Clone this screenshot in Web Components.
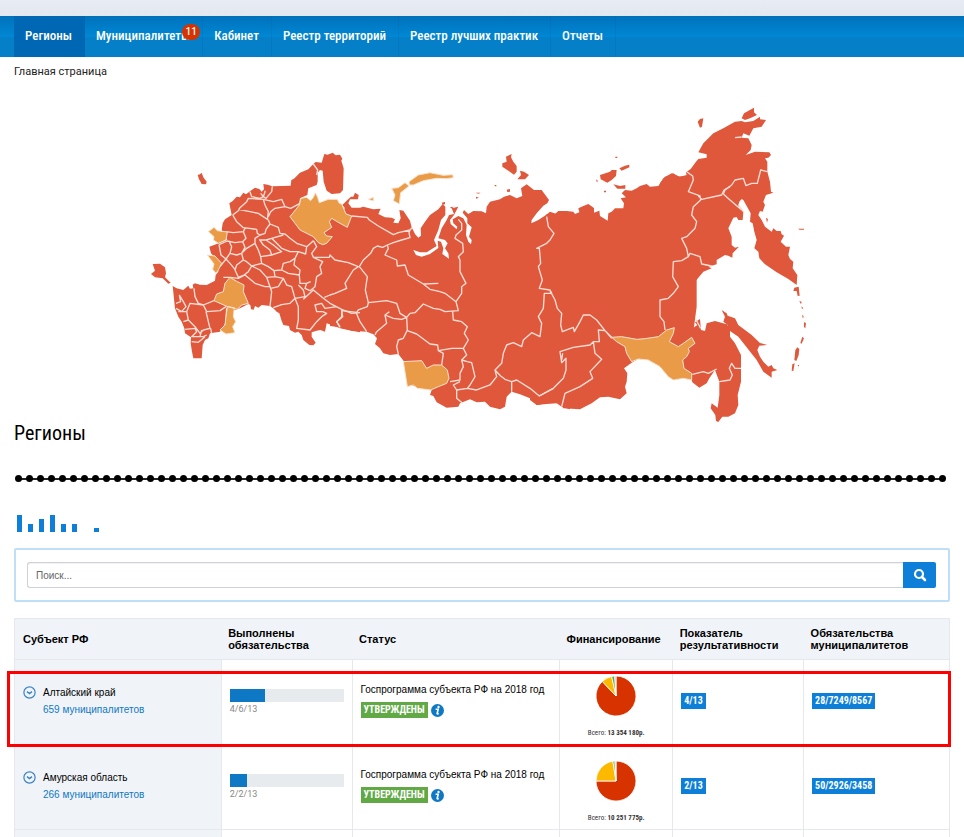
<!DOCTYPE html>
<html lang="ru">
<head>
<meta charset="utf-8">
<title>Регионы</title>
<style>
html, body { margin: 0; }
body { background: #fff; color: #000; font: 10px/12px "Roboto", "Liberation Sans", sans-serif; }
</style>
</head>
<body>
<regions-page></regions-page>

<template id="page-tpl">
<style>
:host { display: block; }
.strip { height: 16px; background: linear-gradient(#e7ecf5, #e3e7ef); }
main { padding: 0 14px; }
.crumbs { font-size: 11px; line-height: 14px; padding: 8px 0 16px; }
.crumbs a { color: #222; text-decoration: none; }
h1 { margin: 0; font: 400 20px/24px "Roboto Condensed", "Liberation Sans Narrow", "Roboto", sans-serif; }
range-dots { margin-top: 30px; }
mini-bars { margin: 33px 0 16px 3px; }
search-panel { margin-bottom: 16px; }
</style>
<div class="strip"></div>
<nav-bar>
  <nav-item current>Регионы</nav-item>
  <nav-item badge="11">Муниципалитеты</nav-item>
  <nav-item>Кабинет</nav-item>
  <nav-item>Реестр территорий</nav-item>
  <nav-item>Реестр лучших практик</nav-item>
  <nav-item>Отчеты</nav-item>
</nav-bar>
<main>
  <div class="crumbs"><a href="#">Главная страница</a></div>
  <russia-map></russia-map>
  <h1>Регионы</h1>
  <range-dots></range-dots>
  <mini-bars values="17 8 13 17 8 8 0 4"></mini-bars>
  <search-panel></search-panel>
  <region-table></region-table>
</main>
</template>

<template id="nav-bar-tpl">
<style>
:host { display: block; padding: 0 14px; background: linear-gradient(#0071bb 0, #0085d1 45%, #0088d4 50%, #047fc8 51%, #047fc8 100%); }
nav { display: flex; height: 41px; }
</style>
<nav><slot></slot></nav>
</template>

<template id="nav-item-tpl">
<style>
:host { display: flex; border-right: 1px solid rgba(0, 90, 160, .2); }
:host([current]) { background: #0067b5; }
a { position: relative; padding: 0 12px 0 11px; color: #fff; text-decoration: none; white-space: nowrap; font: 500 13px/40px "Roboto Condensed", "Liberation Sans Narrow", "Roboto", sans-serif; }
b { position: absolute; top: 8px; right: 2px; min-width: 18px; box-sizing: border-box; padding: 0 3px; border-radius: 8px; background: #d63301; text-align: center; font: 500 10px/16px "Roboto", sans-serif; }
b:empty { display: none; }
</style>
<a href="#"><slot></slot><b></b></a>
</template>

<template id="map-tpl">
<style>
:host { display: block; }
svg { display: block; width: 100%; max-width: 680px; margin: 0 auto; overflow: visible; }
.land { fill: #e0583c; }
.gold { fill: #e99b48; stroke: #fae3cf; stroke-width: 3; stroke-linejoin: round; }
.line { fill: none; stroke: #fbded6; stroke-width: 4; stroke-linejoin: round; }
.west { transform: translate(140px, 140px) scale(.33333); }
.ural { transform: translate(330px, 140px) scale(.33333); }
.lena { transform: translate(530px, 140px) scale(.33333); }
.east { transform: translate(660px, 95px) scale(.33333); }
</style>
<svg viewBox="142 95 680 326" role="img" aria-label="Карта регионов">
<path class="land west" d="M370 132L383 134 397 139 452 137 454 120 462 116 480 98 505 88 520 72 527 66 545 68 553 42 563 44 578 38 587 46 600 44 607 56 604 62 611 85 609 150 600 160 575 162 560 152 551 125 548 92 540 90 533 98 533 125 530 135 505 145 502 165 480 175 478 190 500 200 592 200 660 240V577L635 572 600 565 583 558 560 550 555 575 541 570 530 572 515 577 515 590 527 608 520 616 508 615 490 600 485 585 475 575 465 578 450 570 447 558 430 555 424 540 418 520 410 515 400 505 390 498 365 495 355 503 345 498 341 509 333 508 331 495 325 492 300 505 285 510 258 505 256 550 240 575 210 580 205 595 195 600 188 615 185 655 160 655 156 635 152 610 153 592 135 580 133 565 125 545 115 530 105 505 98 438 110 445 130 450 145 437 150 446 160 445 158 434 165 430 180 434 200 435 225 422 227 405 235 395 232 370 218 345 213 340 208 320 230 312 262 300 245 270 248 250 255 238 275 225 268 190 278 183 290 170 300 172 310 158 318 163 335 150 345 143 358 147 365 155 372 148Z M173 105L180 103 185 98 190 112 200 125 198 133 185 132 177 118Z M38 372L60 371 75 382 78 400 75 412 92 428 85 431 68 415 45 412 33 402 45 392Z"/>
<path class="land ural" d="M20 220L45 205 37 195 52 180 63 170 70 170 75 158 86 165 84 178 60 178 55 190 65 203 90 203 100 200 130 208 152 206 145 222 165 232 185 233 195 238 190 248 205 250 212 235 208 210 220 212 240 242 245 262 255 282 265 293 273 287 272 265 285 245 300 225 325 208 338 192 346 200 346 225 333 240 325 270 312 300 320 318 290 337 270 337 250 330 258 345 275 350 300 342 325 324 323 302 333 305 340 325 337 342 357 356 355 340 345 325 353 310 345 300 325 295 335 265 350 240 357 225 372 222 365 205 385 200 372 225 360 240 362 252 380 268 382 260 370 250 368 238 385 228 400 235 410 255 408 285 415 305 423 313 425 300 417 290 425 262 412 250 412 235 398 218 402 210 415 222 430 213 455 214 468 220 470 200 480 185 510 178 522 170 540 165 560 175 577 168 573 145 590 133 612 150 635 150 657 180 652 190 640 197 620 220 605 240 604 250 625 240 640 230 648 225 660 215 680 222 690 215 720 216V808L695 800 680 790 650 792 620 795 600 775 570 763 545 755 530 770 525 800 510 808 480 800 465 785 440 787 420 778 390 790 385 800 350 803 320 787 310 768 300 765 305 750 262 740 240 735 225 668 205 642 180 645 160 640 150 625 135 612 141 595 130 583 110 575 65 572 30 562 0 558Z M517 70L530 65 528 50 545 42 543 52 550 65 560 78 560 95 552 104 535 92 517 80ZM562 118L573 105 570 92 582 95 597 105 585 118ZM335 188L345 186 345 193 338 194ZM437 158H452L445 161ZM494 135H499V139H494ZM438 170L447 173 438 176ZM530 149L540 147 540 155 532 156ZM360 202L370 200 366 206Z"/>
<path class="land lena" d="M0 780L20 300 50 222 75 222 85 213 110 213 130 215 135 222 148 217 145 205 160 198 175 192 192 204 192 218 208 212 210 228 233 242 235 220 245 215 255 205 280 205 282 190 272 175 288 172 275 160 285 150 305 152 320 145 330 138 350 132 360 140 385 138 400 115 425 100 450 110 470 105 500 200V500L480 650 485 720 460 715 430 720 415 710 390 680 355 660 325 657 305 668 282 685 292 700 290 725 285 740 290 760 270 778 235 770 210 772 185 790 150 808 100 805 90 790 60 788 20 795Z M210 105L240 95 245 90 260 90 258 108 245 120 232 128 212 118ZM268 85L285 77 298 74 298 82 275 92ZM250 133L270 138 286 135 286 146 262 146ZM198 118L205 124 200 125ZM222 152H228V157H222ZM256 50H262V54H256Z"/>
<path class="land east" d="M0 265L15 245 40 235 55 245 80 242 78 232 92 222 108 200 115 192 140 188 140 178 115 172 130 145 160 115 190 100 225 80 245 78 255 82 280 78 300 65 300 73 318 75 305 95 280 100 268 122 250 115 245 128 265 130 275 150 272 165 257 180 285 170 328 172 333 180 325 188 315 190 322 200 322 230 330 260 333 290 340 293 318 300 310 320 315 330 308 350 300 348 295 360 305 375 315 395 335 410 340 400 350 408 362 408 365 418 372 422 362 440 378 455 390 455 385 480 390 492 400 500 398 520 412 540 410 570 385 552 350 532 315 508 298 490 295 470 283 460 290 435 283 410 278 385 270 380 272 355 250 315 245 312 238 320 235 330 250 350 248 375 235 375 230 366 220 368 205 400 215 425 215 450 225 458 237 455 218 475 217 488 205 482 195 480 170 495 170 508 145 515 155 520 130 530 115 548 105 560 105 600 98 655 85 690 100 698 112 690 105 682 120 672 123 705 135 708 140 685 165 678 200 688 210 705 210 725 225 745 243 780 243 860 233 900 235 930 225 955 205 965 187 965 175 981 168 978 166 960 152 940 155 925 173 938 178 900 178 860 165 825 148 850 140 865 118 878 97 862 95 855 70 850 40 855 0 815Z M113 80L120 72 130 70 126 95 120 98ZM245 70L252 55 282 38 282 52 291 60 270 70 255 75ZM185 645L200 655 203 662 225 670 235 690 275 720 300 744 322 750 298 752 292 765 300 785 310 800 325 815 335 810 340 820 352 825 335 830 335 848 310 830 290 795 235 725 210 708 200 700 203 690 190 680 195 665ZM403 578L416 575 419 602 413 603 410 588 400 588ZM418 618L425 620 423 628ZM424 634L430 640 426 642ZM426 660L431 663 429 671ZM432 682L438 684 436 700 432 696ZM427 725L432 730 425 746 421 744ZM406 765L412 757 418 762 416 780 409 798 403 795ZM397 808L404 805 400 828 395 827ZM318 368L324 372 321 383ZM413 811L418 809 415 815ZM415 401L432 401 432 404 418 404Z"/>
<path class="line west" d="M520 72L533 90 530 105M376 152L370 170 378 175 395 155 397 139M330 155L335 170 360 175 370 170 362 160M278 225L295 212 300 203 320 185 325 175 370 178 375 195 385 215 382 240M370 178L400 185 425 178 435 200 405 205 392 215 385 230M435 200L452 205 480 190M295 208L330 215 355 220 385 240 390 252 415 262 420 280 435 282 450 295 470 310 500 320 512 310 520 302M278 225L290 245 310 263 350 268 352 280 360 285 375 280 378 268 390 252M258 275L280 278 310 275 316 263M237 314L262 303 285 308 308 305 318 295 310 275M360 285L345 295 345 310M358 300L378 300 395 295 430 285M237 314L243 345 258 357 270 340 275 320 268 305M270 340L290 345 305 340 315 322 308 305M305 340L320 325 345 310 355 330 362 350 395 345 390 330 370 315 358 298M378 300L400 315 425 335 395 345M395 295L425 325 450 335 475 335 497 342 500 320M362 350L365 370 335 378 320 365 310 360 290 375 285 390 295 412 312 405 325 395 335 378M305 340L310 360M258 357L270 370 285 388M240 380L258 357M365 370L385 380 402 392 425 390 430 370 450 365 465 355 475 335M335 378L360 390 380 412 405 410 402 392M250 412L270 412 295 415 315 405 345 430 375 440 390 440 380 412M405 410L430 415 440 435 455 440 465 475 450 490 425 494 400 503M390 440L395 455 390 500M392 445L415 440 430 415M425 390L445 400 478 405 480 390 462 375 465 355M478 405L480 430 500 430 512 425M500 430L495 445 510 452 525 440 530 410 545 400 540 380 548 365 520 352M475 435L490 450 495 470 465 475M520 302L530 320 515 340 520 352 568 352 570 345 585 360 625 368 655 380 640 390 615 430 620 445 585 460 570 465 553 472M490 478L520 450 550 475 570 490 605 508 635 520 660 518M465 475L475 500 475 540 470 565 510 570 530 545 545 530 560 520 548 515 530 515 525 495 545 490 555 505 590 500M605 508L605 530 590 545 600 560M162 445L165 470 175 490 190 495 200 515 240 512 258 500M118 465L130 485 138 500 125 515 108 505M118 465L122 485 108 490M190 495L150 490 140 515 145 540 165 560 180 580 190 570 210 565 205 545 198 515M115 515L140 515M130 545L145 540M135 568L165 565 170 575 155 590 190 590 200 585M155 605L175 607 195 590M185 570L180 590M212 565L215 580M222 482L190 495"/>
<path class="line ural" d="M65 228L112 232 118 240 145 258 190 284 205 278 240 270 237 278 240 293 215 300 190 308 172 315 158 322 142 318 130 325 122 340 100 360 88 380M88 380L112 410 106 450 115 488 112 500 85 510 80 517 35 512M35 512L38 530 20 545 30 562M78 517L90 545 110 575M240 270L247 262M172 315L175 325 165 345 200 360 202 378 225 375 235 405 280 432 325 430M280 432L300 448 330 455 345 460 378 485M115 488L170 482 200 490 210 520 230 532 240 520 255 518 280 492 310 505 330 508 345 515 385 512 378 485 395 460 395 440 408 430 390 395 390 360 385 350 400 335 398 310 375 295 378 285 395 270 395 250 385 238M230 532L215 538 190 535 165 525 178 515M165 525L170 550 140 575 135 585M230 532L232 570 220 595 205 600 200 620 205 642M232 572L260 582 300 612 323 615 325 632 365 625 400 625 415 600 403 580 412 560 395 545 370 540 368 515M325 632L340 640 335 675M400 625L410 645 395 660 400 680 390 700 390 720 360 725M395 660L412 665 425 668 435 710 420 735 412 745 380 750 370 735 390 725M380 750L380 775 398 790M412 745L440 750 480 735 500 710 495 690 515 670 520 640 530 615 550 608 575 620 580 600 605 578 630 590 635 550 625 530 640 505 643 460 665 460 660 450 628 445 637 420 625 380 632 370 628 325 620 325 650 310 660 300 672 280 655 260 650 230M495 690L512 708 525 718 545 725 545 755M545 725L560 720 600 745 628 768 670 745"/>
<path class="line lena" d="M60 452L75 480 82 505 95 520 92 555 97 575 130 562 133 575 150 545 160 525 180 525 200 540 225 572 245 595M245 592L225 572 205 570 208 605 190 605 180 615 130 622 90 635 95 668 108 655 108 690 100 715 70 745 27 768M98 640L95 660M190 605L195 640 215 658 180 695 188 715 150 740 105 760 100 780 95 800M405 570L402 545 390 530 390 480 415 475 430 460 445 440 428 410 430 365 455 362 475 350 480 340 510 350 515 372 545 378M475 350L470 325 455 295 470 290 495 265 500 245 485 225 490 200 512 180 510 168 475 155 490 120 488 108 470 95M505 168L515 178 575 165 582 150 600 140"/>
<path class="line east" d="M190 297L195 285 215 270 225 255 250 250 258 272 275 265 292 265 302 225 322 230M190 297L210 315 245 345M236 330L250 350M225 128L245 126M97 838L130 830 145 835 170 822M178 860L210 855 217 840 208 820 215 805 225 820 243 820M107 672L122 700"/>
<path class="gold west" d="M450 230L478 195 483 175 500 172 512 182 520 172 526 158 533 172 538 188 565 178 592 178 598 190 605 192 618 222 635 228 622 262 600 250 575 235 568 245 575 262 552 278 560 288 577 290 560 310 548 314 535 308 520 290 480 270 465 250ZM205 275L222 262 232 272 262 276 258 300 235 310 220 300 222 290ZM202 345L225 348 245 370 235 390 228 400 218 388 222 372ZM270 412L290 424 312 435 310 455 325 490 305 495 292 508 258 498 222 482 230 462 250 455 255 430ZM262 500L283 503 280 530 287 545 278 560 285 578 258 582 240 570 255 555 258 530Z"/>
<path class="gold ural" d="M185 145L205 143 225 128 237 138 225 148 212 158 208 192 190 182 195 165ZM237 125L265 105 300 98 340 106 368 104 370 113 350 116 320 115 280 122 250 135 238 135ZM115 178L130 172 130 183ZM220 665L275 662 290 685 310 675 335 675 352 690 357 715 350 730 325 740 302 750 262 745 250 735 232 740Z"/>
<path class="gold lena" d="M245 592L275 590 320 598 345 596 385 590 410 570 433 563 430 580 418 605 445 620 460 610 485 592 495 610 475 625 478 635 470 650 458 660 462 685 485 700 485 720 460 715 430 720 415 710 390 680 355 660 325 657 305 665 290 640 285 620 260 605Z"/>
</svg>
</template>

<template id="dots-tpl">
<style>
:host { display: block; padding: 0 3px 0 1px; }
div { display: flex; justify-content: space-between; align-items: center; background: linear-gradient(#222, #222) center / calc(100% - 6px) 2px no-repeat; }
i { width: 7px; height: 7px; border-radius: 50%; background: #000; }
</style>
<div></div>
</template>

<template id="bars-tpl">
<style>
:host { display: flex; align-items: flex-end; gap: 6px; height: 17px; }
i { width: 5px; background: #0d7fd8; }
</style>
</template>

<template id="search-tpl">
<style>
:host { display: block; border: 2px solid #bfdff7; border-radius: 2px; padding: 12px 12px 12px 11px; }
form { display: flex; height: 26px; }
input { flex: 1; min-width: 0; box-sizing: border-box; border: 1px solid #cdd1d8; border-right: 0; border-radius: 3px 0 0 3px; padding: 2px 8px 0; font: 10px/12px "Liberation Sans", sans-serif; color: #333; box-shadow: inset 0 1px 1px rgba(0, 0, 0, .06); outline: 0; }
input::placeholder { color: #666; opacity: 1; }
button { width: 33px; border: 0; padding: 0; border-radius: 0 2px 2px 0; background: #0d7fd8; display: grid; place-items: center; }
</style>
<form onsubmit="return false">
  <input type="text" placeholder="Поиск..." aria-label="Поиск">
  <button type="submit" aria-label="Найти"><svg width="14" height="14" viewBox="0 0 14 14" fill="none" stroke="#fff"><circle cx="6" cy="6" r="4" stroke-width="2.2"/><path d="M9 9l3 3" stroke-width="2.6" stroke-linecap="round"/></svg></button>
</form>
</template>

<template id="progress-tpl">
<style>
:host { display: block; color: #888; font: 9px/14px "Roboto", sans-serif; }
.track { height: 13px; background: #e7ebee; }
.fill { height: 100%; background: #0f78c4; }
</style>
<div class="track"><div class="fill"></div></div>
<slot></slot>
</template>

<template id="tag-tpl">
<style>
:host { display: inline-block; padding: 0 3px; background: #0d7fd8; color: #fff; font: 700 10px/16px "Roboto Condensed", "Liberation Sans Narrow", sans-serif; white-space: nowrap; }
:host([tone="green"]) { background: #60a945; }
</style>
<slot></slot>
</template>

<template id="pie-tpl">
<style>
:host { display: block; text-align: center; color: #333; font: 7px/10px "Roboto Condensed", "Liberation Sans Narrow", sans-serif; }
svg { display: block; margin: 0 auto 12px; }
</style>
<svg width="40" height="40" viewBox="-20 -20 40 40" stroke="#fff" stroke-width=".8"></svg>
<slot></slot>
</template>

<template id="table-tpl">
<style>
:host { display: block; position: relative; }
table { width: 100%; border-collapse: collapse; table-layout: fixed; }
th, td { border: 1px solid #e5e9ed; text-align: left; vertical-align: top; }
th { height: 40px; padding: 0 7px; background: #f0f4f8; border-left: 0; border-right: 0; vertical-align: middle; white-space: nowrap; font: 700 11px/12px "Liberation Sans", sans-serif; }
tr > :first-child { background: #f0f4f8; border-left: 1px solid #e5e9ed; padding-left: 8px; }
th:last-child { border-right: 1px solid #e5e9ed; }
td { height: 85px; box-sizing: border-box; padding: 24px 8px 0; }
tr.tail td { height: 8px; padding: 0; border-bottom: 0; }
.name { display: flex; gap: 7px; line-height: 17px; }
.name, .status { font-family: "Liberation Sans", sans-serif; }
.name button { border: 0; padding: 2px 0 0; background: none; height: 15px; }
.name svg, .info svg { display: block; }
.name a { color: #0f78c4; text-decoration: none; }
.info { display: flex; gap: 3px; align-items: center; margin-top: 6px; }
.info button { border: 0; padding: 0; background: none; }
td.bar { padding-top: 29px; }
td.money { padding-top: 16px; }
td.tags { padding-top: 33px; }
.mark { position: absolute; box-sizing: border-box; top: 53px; left: -7px; right: -1px; height: 76px; border: 3px solid #f00; pointer-events: none; }
</style>
<table>
<colgroup><col style="width:22.1%"><col style="width:14%"><col style="width:22.2%"><col style="width:12.1%"><col style="width:14%"><col style="width:15.6%"></colgroup>
<thead><tr><th>Субъект РФ</th><th>Выполнены<br>обязательства</th><th>Статус</th><th>Финансирование</th><th>Показатель<br>результативности</th><th>Обязательства<br>муниципалитетов</th></tr></thead>
<tbody></tbody>
</table>
<div class="mark"></div>
</template>

<script>
const define = (name, tpl, setup) => customElements.define(name, class extends HTMLElement {
  constructor() {
    super();
    this.attachShadow({ mode: 'open' }).append(document.getElementById(tpl).content.cloneNode(true));
  }
  connectedCallback() {
    if (this.ready) return;
    this.ready = true;
    if (setup) setup(this, this.shadowRoot);
  }
});

define('nav-bar', 'nav-bar-tpl');
define('nav-item', 'nav-item-tpl', (el, root) => {
  root.querySelector('b').textContent = el.getAttribute('badge') || '';
  if (el.hasAttribute('current')) root.querySelector('a').setAttribute('aria-current', 'page');
});
define('russia-map', 'map-tpl');
define('range-dots', 'dots-tpl', (el, root) => {
  root.querySelector('div').innerHTML = '<i></i>'.repeat(85);
});
define('mini-bars', 'bars-tpl', (el, root) => {
  for (const v of el.getAttribute('values').split(' ')) {
    const bar = document.createElement('i');
    bar.style.height = v + 'px';
    root.append(bar);
  }
});
define('search-panel', 'search-tpl');
define('progress-meter', 'progress-tpl', (el, root) => {
  root.querySelector('.fill').style.width = el.getAttribute('value') + '%';
});
define('color-tag', 'tag-tpl');
define('pie-chart', 'pie-tpl', (el, root) => {
  const colors = ['#d63301', '#fdb900', '#60a945', '#b5b5b5'];
  let from = 0, out = '';
  const at = t => `${20 * Math.sin(t * 2 * Math.PI)} ${-20 * Math.cos(t * 2 * Math.PI)}`;
  el.getAttribute('parts').split(' ').forEach((p, i) => {
    const to = from + p / 100;
    out += `<path fill="${colors[i]}" d="M0 0L${at(from)}A20 20 0 ${to - from > .5 ? 1 : 0} 1 ${at(to)}Z"/>`;
    from = to;
  });
  root.querySelector('svg').innerHTML = out;
});

const rows = [
  { name: 'Алтайский край', towns: 659, done: '4/6/13', fill: 31, parts: '88 8.5 2.5 1', total: '13 354 180р.', score: '4/13', duties: '28/7249/8567' },
  { name: 'Амурская область', towns: 266, done: '2/2/13', fill: 15, parts: '75 22.5 1.7 .8', total: '10 251 775р.', score: '2/13', duties: '50/2926/3458' }
];
define('region-table', 'table-tpl', (el, root) => {
  root.querySelector('tbody').innerHTML = rows.map(r => `<tr>
    <td><div class="name"><button aria-label="Развернуть"><svg width="13" height="13" viewBox="0 0 13 13" fill="none" stroke="#3a83c6"><circle cx="6.5" cy="6.5" r="5.6" stroke-width="1.2"/><path d="M4 5.6l2.5 2 2.5-2" stroke-width="1.4"/></svg></button><div>${r.name}<br><a href="#">${r.towns} муниципалитетов</a></div></div></td>
    <td class="bar"><progress-meter value="${r.fill}">${r.done}</progress-meter></td>
    <td><div class="status">Госпрограмма субъекта РФ на 2018 год</div><div class="info"><color-tag tone="green">УТВЕРЖДЕНЫ</color-tag><button aria-label="Информация"><svg width="13" height="13" viewBox="0 0 13 13"><circle cx="6.5" cy="6.5" r="6.5" fill="#0f78c4"/><circle cx="7.5" cy="3" r="1.2" fill="#fff"/><path d="M4.6 5.2h2.6L6.1 9.6q0 .6 1.7 0" fill="none" stroke="#fff" stroke-width="1.6"/></svg></button></div></td>
    <td class="money"><pie-chart parts="${r.parts}">Всего: <b>${r.total}</b></pie-chart></td>
    <td class="tags"><color-tag>${r.score}</color-tag></td>
    <td class="tags"><color-tag>${r.duties}</color-tag></td></tr>`).join('') +
    '<tr class="tail">' + '<td></td>'.repeat(6) + '</tr>';
});
define('regions-page', 'page-tpl');
</script>
</body>
</html>
